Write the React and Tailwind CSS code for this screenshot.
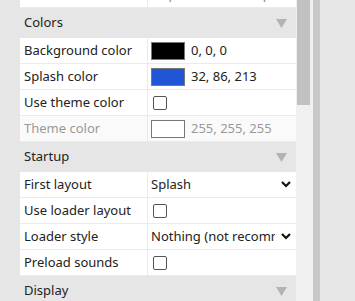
const Tri = () => (
  <svg width="11" height="9" viewBox="0 0 11 9" className="mr-[9px]">
    <polygon points="0,0 11,0 5.5,9" fill="#b3b3b3" />
  </svg>
);

const Chevron = () => (
  <svg width="10" height="7" viewBox="0 0 10 7" className="shrink-0 ml-[6px] mr-[5px]">
    <polyline points="1,1 5,5 9,1" fill="none" stroke="#111" strokeWidth="2.2" />
  </svg>
);

const Check = () => <div className="w-[14px] h-[14px] rounded-[2px] border border-[#555] bg-white ml-[2px]" />;

const Swatch = ({ color, text, muted }) => (
  <div className="flex items-center">
    <div className="w-[34px] h-[18px] border border-[#777]" style={{ backgroundColor: color }} />
    <span className={`ml-[6px] ${muted ? 'text-[#999]' : 'text-[#222]'}`}>{text}</span>
  </div>
);

function Header({ title }) {
  return (
    <div className="h-[30px] flex items-center justify-between pl-6 bg-[#e6e6e6] text-[#222]">
      <span>{title}</span>
      <Tri />
    </div>
  );
}

function Row({ label, children, muted, first }) {
  return (
    <div className={`ml-5 h-[26px] flex border-b border-[#ebebeb] ${muted ? 'bg-[#fafafa]' : 'bg-white'} ${first ? 'mt-[-18px]' : ''}`}>
      <div className={`w-[128px] shrink-0 pl-1 flex items-center border-r border-[#ebebeb] ${muted ? 'text-[#999]' : 'text-[#222]'}`}>
        {label}
      </div>
      <div className="flex-1 min-w-0 pl-[3px] flex items-center overflow-hidden whitespace-nowrap">{children}</div>
    </div>
  );
}

export default function App() {
  return (
    <div className="w-[355px] h-[301px] flex overflow-hidden bg-[#e6e6e6] text-[13px] font-['Noto_Sans',sans-serif]">
      <div className="w-[296px] shrink-0 overflow-hidden">
        <Row label="Website" first>
          <span className="text-[#888]">https://www.example.com</span>
        </Row>
        <Header title="Colors" />
        <Row label="Background color"><Swatch color="#000000" text="0, 0, 0" /></Row>
        <Row label="Splash color"><Swatch color="#2056d5" text="32, 86, 213" /></Row>
        <Row label="Use theme color"><Check /></Row>
        <Row label="Theme color" muted><Swatch color="#ffffff" text="255, 255, 255" muted /></Row>
        <Header title="Startup" />
        <Row label="First layout">
          <span className="flex-1 text-[#222]">Splash</span>
          <Chevron />
        </Row>
        <Row label="Use loader layout"><Check /></Row>
        <Row label="Loader style">
          <span className="flex-1 min-w-0 overflow-hidden text-[#222]">Nothing (not recommended)</span>
          <Chevron />
        </Row>
        <Row label="Preload sounds"><Check /></Row>
        <Header title="Display" />
      </div>
      <div className="w-[17px] shrink-0 bg-[#f0f0f0] pl-[1px]">
        <div className="w-[13px] h-[105px] bg-[#c1c1c1]" />
      </div>
      <div className="w-[7px] shrink-0 bg-[#c9c9c9]" />
      <div className="flex-1" />
    </div>
  );
}
